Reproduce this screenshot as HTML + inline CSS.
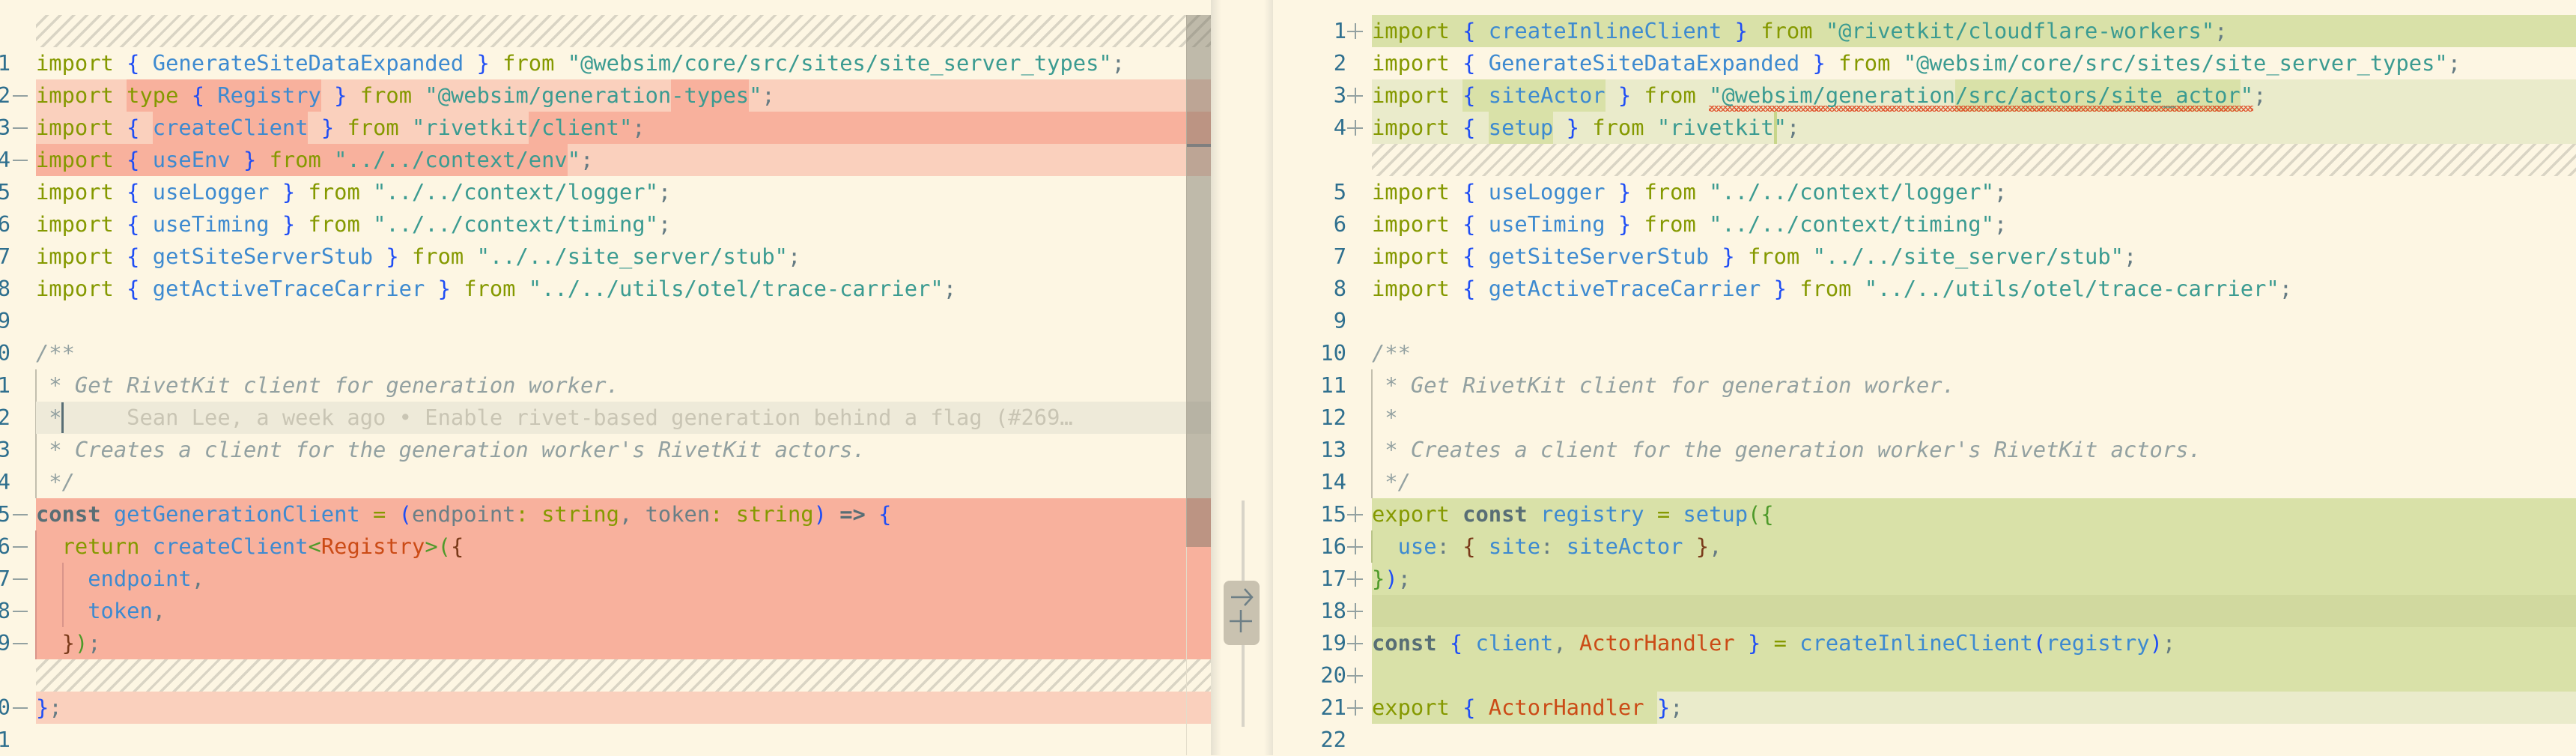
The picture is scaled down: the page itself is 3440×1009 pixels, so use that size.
<!DOCTYPE html>
<html><head><meta charset="utf-8"><style>
html,body{margin:0;padding:0;}
body{width:3440px;height:1008px;background:#fdf6e3;position:relative;overflow:hidden;font-family:"DejaVu Sans Mono","Liberation Mono",monospace;font-size:28.75px;}
.r{position:absolute;height:43px;line-height:43px;white-space:pre;}
.L{left:0;width:1617px;}
.R{left:0;width:3440px;}
.t{position:absolute;top:0;}
.L .t{left:48px}
.R .t{left:1832px}
.ln{position:absolute;top:0;color:#2e6f8e;text-align:right;}
.L .ln{left:-60px;width:74px}
.R .ln{left:1720px;width:78px}
.dash{position:absolute;left:17px;top:21px;width:20px;height:2px;background:#93a1a1}
.plus{position:absolute;left:1799px;top:11px;width:21px;height:21px}
.plus:before{content:"";position:absolute;left:0;top:10px;width:21px;height:2px;background:#93a1a1}
.plus:after{content:"";position:absolute;left:10px;top:0;width:2px;height:21px;background:#93a1a1}
.bg{position:absolute;top:0;height:43px}
.rl{background:#fad0bd}.rs{background:#f8b19d}
.gl{background:#eaebcb}.gs{background:#d9e1a8}
.hatch{position:absolute;height:43px;background:repeating-linear-gradient(135deg,#fdf6e3 0px,#fdf6e3 9px,#d9d4c4 9px,#d9d4c4 12.5px);}
.k{color:#859900}.b{color:#1f4ef5}.i{color:#3d8ad0}.s{color:#3b9b91}.p{color:#657b83}
.c{color:#93a1a1;font-style:italic}.n{color:#586e75;font-weight:bold}.o{color:#cb4b16}
.g{color:#4e9a2a}.br{color:#7a3a1a}.v{color:#6a7f86}
.guide{position:absolute;width:2px;background:#c3bfae}
</style></head><body>

<!-- LEFT PANE -->
<div style="position:absolute;left:0;top:0;width:1617px;height:1008px;overflow:hidden">
<div class="hatch" style="left:48px;top:20px;width:1569px"></div>

<div class="r L" style="top:63px"><span class="ln">1</span><span class="t"><span class="k">import</span> <span class="b">{</span> <span class="i">GenerateSiteDataExpanded</span> <span class="b">}</span> <span class="k">from</span> <span class="s">"@websim/core/src/sites/site_server_types"</span><span class="p">;</span></span></div>

<div class="r L" style="top:106px"><div class="bg rl" style="left:48px;width:1569px"></div><div class="bg rs" style="left:calc(48px + 7ch);width:15ch"></div><div class="bg rs" style="left:calc(48px + 49ch);width:6ch"></div><span class="ln">2</span><span class="dash"></span><span class="t"><span class="k">import</span> <span class="k">type</span> <span class="b">{</span> <span class="i">Registry</span> <span class="b">}</span> <span class="k">from</span> <span class="s">"@websim/generation-types"</span><span class="p">;</span></span></div>

<div class="r L" style="top:149px"><div class="bg rl" style="left:48px;width:1569px"></div><div class="bg rs" style="left:calc(48px + 9ch);width:12ch"></div><div class="bg rs" style="left:calc(48px + 38ch);right:0"></div><span class="ln">3</span><span class="dash"></span><span class="t"><span class="k">import</span> <span class="b">{</span> <span class="i">createClient</span> <span class="b">}</span> <span class="k">from</span> <span class="s">"rivetkit/client"</span><span class="p">;</span></span></div>

<div class="r L" style="top:192px"><div class="bg rl" style="left:48px;width:1569px"></div><div class="bg rs" style="left:48px;width:41ch"></div><span class="ln">4</span><span class="dash"></span><span class="t"><span class="k">import</span> <span class="b">{</span> <span class="i">useEnv</span> <span class="b">}</span> <span class="k">from</span> <span class="s">"../../context/env"</span><span class="p">;</span></span></div>

<div class="r L" style="top:235px"><span class="ln">5</span><span class="t"><span class="k">import</span> <span class="b">{</span> <span class="i">useLogger</span> <span class="b">}</span> <span class="k">from</span> <span class="s">"../../context/logger"</span><span class="p">;</span></span></div>
<div class="r L" style="top:278px"><span class="ln">6</span><span class="t"><span class="k">import</span> <span class="b">{</span> <span class="i">useTiming</span> <span class="b">}</span> <span class="k">from</span> <span class="s">"../../context/timing"</span><span class="p">;</span></span></div>
<div class="r L" style="top:321px"><span class="ln">7</span><span class="t"><span class="k">import</span> <span class="b">{</span> <span class="i">getSiteServerStub</span> <span class="b">}</span> <span class="k">from</span> <span class="s">"../../site_server/stub"</span><span class="p">;</span></span></div>
<div class="r L" style="top:364px"><span class="ln">8</span><span class="t"><span class="k">import</span> <span class="b">{</span> <span class="i">getActiveTraceCarrier</span> <span class="b">}</span> <span class="k">from</span> <span class="s">"../../utils/otel/trace-carrier"</span><span class="p">;</span></span></div>
<div class="r L" style="top:407px"><span class="ln">9</span></div>
<div class="r L" style="top:450px"><span class="ln">10</span><span class="t c">/**</span></div>
<div class="guide" style="left:47px;top:493px;height:172px"></div>
<div class="r L" style="top:493px"><span class="ln">11</span><span class="t c"> * Get RivetKit client for generation worker.</span></div>
<div class="r L" style="top:536px"><div class="bg" style="left:48px;width:1569px;background:#eeead9"></div><div class="bg" style="left:82px;width:3px;top:1px;height:41px;background:#586e75"></div><span class="ln">12</span><span class="t"><span class="c"> *</span><span style="color:#c9c5b4">     Sean Lee, a week ago • Enable rivet-based generation behind a flag (#269…</span></span></div>
<div class="r L" style="top:579px"><span class="ln">13</span><span class="t c"> * Creates a client for the generation worker's RivetKit actors.</span></div>
<div class="r L" style="top:622px"><span class="ln">14</span><span class="t c"> */</span></div>

<div class="r L" style="top:665px"><div class="bg rs" style="left:48px;width:1569px"></div><span class="ln">15</span><span class="dash"></span><span class="t"><span class="n">const</span> <span class="i">getGenerationClient</span> <span class="k">=</span> <span class="b">(</span><span class="v">endpoint</span><span class="k">:</span> <span class="k">string</span><span class="p">,</span> <span class="v">token</span><span class="k">:</span> <span class="k">string</span><span class="b">)</span> <span class="n">=&gt;</span> <span class="b">{</span></span></div>
<div class="r L" style="top:708px"><div class="bg rs" style="left:48px;width:1569px"></div><span class="ln">16</span><span class="dash"></span><span class="t">  <span class="k">return</span> <span class="i">createClient</span><span class="g">&lt;</span><span class="o">Registry</span><span class="g">&gt;(</span><span class="br">{</span></span></div>
<div class="r L" style="top:751px"><div class="bg rs" style="left:48px;width:1569px"></div><span class="ln">17</span><span class="dash"></span><span class="t">    <span class="i">endpoint</span><span class="p">,</span></span></div>
<div class="r L" style="top:794px"><div class="bg rs" style="left:48px;width:1569px"></div><span class="ln">18</span><span class="dash"></span><span class="t">    <span class="i">token</span><span class="p">,</span></span></div>
<div class="r L" style="top:837px"><div class="bg rs" style="left:48px;width:1569px"></div><span class="ln">19</span><span class="dash"></span><span class="t">  <span class="br">}</span><span class="g">)</span><span class="p">;</span></span></div>
<div class="guide" style="left:47px;top:708px;height:172px;background:#d9958a"></div>
<div class="guide" style="left:83px;top:751px;height:86px;background:#d9958a"></div>
<div class="hatch" style="left:48px;top:880px;width:1569px"></div>
<div class="r L" style="top:923px"><div class="bg rl" style="left:48px;width:1569px"></div><span class="ln">20</span><span class="dash"></span><span class="t"><span class="b">}</span><span class="p">;</span></span></div>
<div class="r L" style="top:966px"><span class="ln">21</span></div>

<!-- scrollbar -->
<div style="position:absolute;left:1584px;top:20px;width:1px;height:988px;background:#e3ddcb"></div>
<div style="position:absolute;left:1584px;top:20px;width:33px;height:710px;background:rgba(115,114,100,0.45)"></div>
<div style="position:absolute;left:1585px;top:192px;width:32px;height:4px;background:#7f7f7f"></div>
</div>

<!-- GUTTER -->
<div style="position:absolute;left:1617px;top:0;width:14px;height:1008px;background:linear-gradient(90deg,#e6e1d1,#fdf6e3)"></div>
<div style="position:absolute;left:1688px;top:0;width:12px;height:1008px;background:linear-gradient(90deg,#fdf6e3,#e9e4d4)"></div>
<div style="position:absolute;left:1658px;top:668px;width:4px;height:302px;background:#d8d4c8"></div>
<div style="position:absolute;left:1634px;top:775px;width:48px;height:86px;border-radius:8px;background:#c9c2b0"></div>
<svg style="position:absolute;left:1634px;top:775px" width="48" height="86" viewBox="0 0 48 86"><path d="M10 22 H38 M28 11 L38 22 L28 33" stroke="#6d7f86" stroke-width="2.5" fill="none"/><path d="M8 54 H38 M23 39 V69" stroke="#6d7f86" stroke-width="2.5" fill="none"/></svg>

<!-- RIGHT PANE -->
<div class="r R" style="top:20px"><div class="bg gs" style="left:1832px;right:0"></div><span class="ln">1</span><span class="plus"></span><span class="t"><span class="k">import</span> <span class="b">{</span> <span class="i">createInlineClient</span> <span class="b">}</span> <span class="k">from</span> <span class="s">"@rivetkit/cloudflare-workers"</span><span class="p">;</span></span></div>
<div class="r R" style="top:63px"><span class="ln">2</span><span class="t"><span class="k">import</span> <span class="b">{</span> <span class="i">GenerateSiteDataExpanded</span> <span class="b">}</span> <span class="k">from</span> <span class="s">"@websim/core/src/sites/site_server_types"</span><span class="p">;</span></span></div>
<div class="r R" style="top:106px"><div class="bg gl" style="left:1832px;right:0"></div><div class="bg gs" style="left:calc(1832px + 7ch);width:11ch"></div><div class="bg gs" style="left:calc(1832px + 45ch);width:22ch"></div><div style="position:absolute;left:calc(1832px + 26ch);top:35px;width:42ch;height:8px;background:repeating-linear-gradient(45deg,transparent 0,transparent 2px,#e0401a 2px,#e0401a 3.5px,transparent 3.5px,transparent 4.2px),repeating-linear-gradient(-45deg,transparent 0,transparent 2px,#e0401a 2px,#e0401a 3.5px,transparent 3.5px,transparent 4.2px);opacity:.85"></div><span class="ln">3</span><span class="plus"></span><span class="t"><span class="k">import</span> <span class="b">{</span> <span class="i">siteActor</span> <span class="b">}</span> <span class="k">from</span> <span class="s">"@websim/generation/src/actors/site_actor"</span><span class="p">;</span></span></div>
<div class="r R" style="top:149px"><div class="bg gl" style="left:1832px;right:0"></div><div class="bg gs" style="left:calc(1832px + 9ch);width:5ch"></div><div class="bg gs" style="left:calc(1832px + 31ch);width:4px;background:#c8d68a"></div><span class="ln">4</span><span class="plus"></span><span class="t"><span class="k">import</span> <span class="b">{</span> <span class="i">setup</span> <span class="b">}</span> <span class="k">from</span> <span class="s">"rivetkit"</span><span class="p">;</span></span></div>
<div class="hatch" style="left:1832px;top:192px;width:1608px"></div>
<div class="r R" style="top:235px"><span class="ln">5</span><span class="t"><span class="k">import</span> <span class="b">{</span> <span class="i">useLogger</span> <span class="b">}</span> <span class="k">from</span> <span class="s">"../../context/logger"</span><span class="p">;</span></span></div>
<div class="r R" style="top:278px"><span class="ln">6</span><span class="t"><span class="k">import</span> <span class="b">{</span> <span class="i">useTiming</span> <span class="b">}</span> <span class="k">from</span> <span class="s">"../../context/timing"</span><span class="p">;</span></span></div>
<div class="r R" style="top:321px"><span class="ln">7</span><span class="t"><span class="k">import</span> <span class="b">{</span> <span class="i">getSiteServerStub</span> <span class="b">}</span> <span class="k">from</span> <span class="s">"../../site_server/stub"</span><span class="p">;</span></span></div>
<div class="r R" style="top:364px"><span class="ln">8</span><span class="t"><span class="k">import</span> <span class="b">{</span> <span class="i">getActiveTraceCarrier</span> <span class="b">}</span> <span class="k">from</span> <span class="s">"../../utils/otel/trace-carrier"</span><span class="p">;</span></span></div>
<div class="r R" style="top:407px"><span class="ln">9</span></div>
<div class="r R" style="top:450px"><span class="ln">10</span><span class="t c">/**</span></div>
<div class="guide" style="left:1831px;top:493px;height:172px"></div>
<div class="r R" style="top:493px"><span class="ln">11</span><span class="t c"> * Get RivetKit client for generation worker.</span></div>
<div class="r R" style="top:536px"><span class="ln">12</span><span class="t c"> *</span></div>
<div class="r R" style="top:579px"><span class="ln">13</span><span class="t c"> * Creates a client for the generation worker's RivetKit actors.</span></div>
<div class="r R" style="top:622px"><span class="ln">14</span><span class="t c"> */</span></div>
<div class="r R" style="top:665px"><div class="bg gs" style="left:1832px;right:0"></div><span class="ln">15</span><span class="plus"></span><span class="t"><span class="k">export</span> <span class="n">const</span> <span class="i">registry</span> <span class="k">=</span> <span class="i">setup</span><span class="g">(</span><span class="g">{</span></span></div>
<div class="r R" style="top:708px"><div class="bg gs" style="left:1832px;right:0"></div><span class="ln">16</span><span class="plus"></span><span class="t">  <span class="i">use</span><span class="p">:</span> <span class="br">{</span> <span class="i">site</span><span class="p">:</span> <span class="i">siteActor</span> <span class="br">}</span><span class="p">,</span></span></div>
<div class="guide" style="left:1831px;top:708px;height:43px;background:#b9c48a"></div>
<div class="r R" style="top:751px"><div class="bg gs" style="left:1832px;right:0"></div><span class="ln">17</span><span class="plus"></span><span class="t"><span class="g">}</span><span class="b">)</span><span class="p">;</span></span></div>
<div class="r R" style="top:794px"><div class="bg" style="left:1832px;right:0;background:#d1d99f"></div><span class="ln">18</span><span class="plus"></span></div>
<div class="r R" style="top:837px"><div class="bg gs" style="left:1832px;right:0"></div><span class="ln">19</span><span class="plus"></span><span class="t"><span class="n">const</span> <span class="b">{</span> <span class="i">client</span><span class="p">,</span> <span class="o">ActorHandler</span> <span class="b">}</span> <span class="k">=</span> <span class="i">createInlineClient</span><span class="b">(</span><span class="i">registry</span><span class="b">)</span><span class="p">;</span></span></div>
<div class="r R" style="top:880px"><div class="bg gs" style="left:1832px;right:0"></div><span class="ln">20</span><span class="plus"></span></div>
<div class="r R" style="top:923px"><div class="bg gl" style="left:1832px;right:0"></div><div class="bg gs" style="left:1832px;width:22ch"></div><span class="ln">21</span><span class="plus"></span><span class="t"><span class="k">export</span> <span class="b">{</span> <span class="o">ActorHandler</span> <span class="b">}</span><span class="p">;</span></span></div>
<div class="r R" style="top:966px"><span class="ln">22</span></div>

</body></html>
